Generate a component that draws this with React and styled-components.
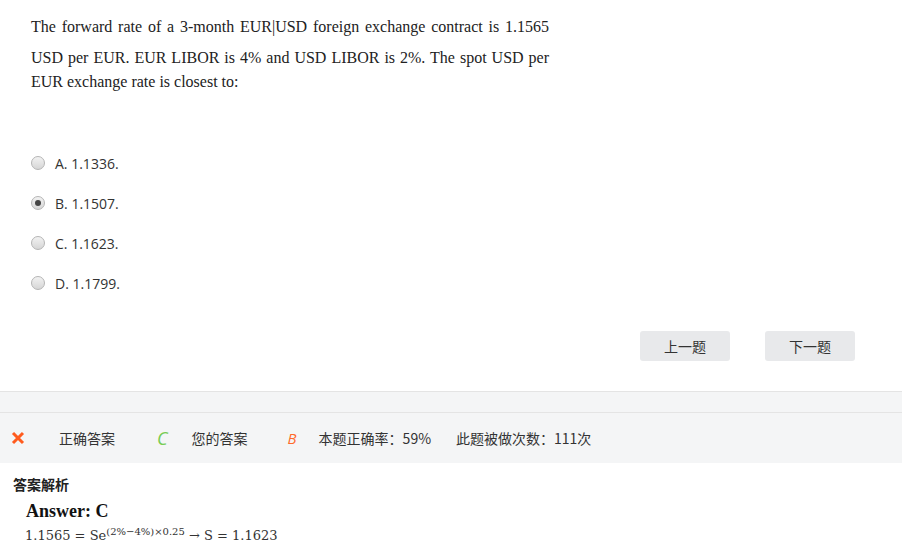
import styled, { createGlobalStyle } from "styled-components";

const GlobalStyle = createGlobalStyle`
  body {
    margin: 0;
    background: #ffffff;
    font-family: "Open Sans", "Noto Sans CJK SC", sans-serif;
  }
`;

const options = [
  { key: "A", text: "1.1336." },
  { key: "B", text: "1.1507.", checked: true },
  { key: "C", text: "1.1623." },
  { key: "D", text: "1.1799." },
];

export default function App() {
  return (
    <Page>
      <GlobalStyle />
      <Question>
        <Stem>
          The forward rate of a 3-month EUR|USD foreign exchange contract is 1.1565
          USD per EUR. EUR LIBOR is 4% and USD LIBOR is 2%. The spot USD per
          EUR exchange rate is closest to:
        </Stem>
        <Options>
          {options.map((o) => (
            <Option key={o.key}>
              <Radio checked={o.checked} />
              <span>
                {o.key}. {o.text}
              </span>
            </Option>
          ))}
        </Options>
        <Buttons>
          <NavButton>上一题</NavButton>
          <NavButton>下一题</NavButton>
        </Buttons>
      </Question>

      <Band />
      <ResultBar>
        <Cross viewBox="0 0 14 14">
          <path d="M2 2 L12 12 M12 2 L2 12" stroke="#ff5b1e" strokeWidth="3" />
        </Cross>
        <Label>正确答案</Label>
        <Letter color="#76cc54" size="18px" before="42px" after="24px">C</Letter>
        <Label>您的答案</Label>
        <Letter color="#ff6a2c" size="15px" before="40px" after="22px">B</Letter>
        <Label after="25px">本题正确率：59%</Label>
        <Label>此题被做次数：111次</Label>
      </ResultBar>

      <Analysis>
        <AnalysisTitle>答案解析</AnalysisTitle>
        <Answer>Answer: C</Answer>
        <Formula>
          1.1565 = Se<sup>(2%−4%)×0.25</sup> → S = 1.1623
        </Formula>
      </Analysis>
    </Page>
  );
}

const Page = styled.div`
  width: 902px;
  min-height: 558px;
  color: #333;
`;

const Question = styled.div`
  padding: 8px 0 30px 31px;
`;

const Stem = styled.p`
  margin: 0;
  width: 518px;
  font-family: "Liberation Serif", serif;
  font-size: 16px;
  line-height: 24px;
  text-align: justify;
  color: #222;

  &::first-line {
    line-height: 38px;
  }
`;

const Options = styled.div`
  display: flex;
  flex-direction: column;
  gap: 20px;
  margin-top: 59px;
`;

const Option = styled.label`
  display: flex;
  align-items: center;
  gap: 10px;
  height: 20px;
  font-size: 14px;
  color: #333;
`;

const Radio = styled.span`
  position: relative;
  width: 14px;
  height: 14px;
  border-radius: 50%;
  border: 1px solid #b5b5b5;
  background: linear-gradient(#f2f2f2, #d6d6d6);
  box-sizing: border-box;

  &::after {
    content: "";
    display: ${(p) => (p.checked ? "block" : "none")};
    position: absolute;
    left: 3px;
    top: 3px;
    width: 6px;
    height: 6px;
    border-radius: 50%;
    background: #444;
  }
`;

const Buttons = styled.div`
  display: flex;
  justify-content: flex-end;
  gap: 35px;
  margin-top: 38px;
  padding-right: 47px;
`;

const NavButton = styled.button`
  width: 90px;
  height: 30px;
  border: none;
  border-radius: 3px;
  background: #e8e9eb;
  color: #333;
  font-family: "Noto Sans CJK SC", sans-serif;
  font-size: 14px;
`;

const Band = styled.div`
  height: 20px;
  background: #f4f5f6;
  border-top: 1px solid #e4e4e4;
  border-bottom: 1px solid #e4e4e4;
`;

const ResultBar = styled.div`
  display: flex;
  align-items: center;
  height: 50px;
  padding-left: 11px;
  background: #f4f5f6;
  font-family: "Noto Sans CJK SC", sans-serif;
  font-size: 14px;
`;

const Cross = styled.svg`
  width: 14px;
  height: 14px;
  margin-right: 34px;
`;

const Label = styled.span`
  color: #333;
  margin-right: ${(p) => p.after || "0"};
`;

const Letter = styled.span`
  font-family: "Open Sans", sans-serif;
  font-style: italic;
  font-size: ${(p) => p.size};
  color: ${(p) => p.color};
  margin: 0 ${(p) => p.after} 0 ${(p) => p.before};
`;

const Analysis = styled.div`
  padding: 11px 0 0 13px;
`;

const AnalysisTitle = styled.div`
  font-family: "Noto Sans CJK SC", sans-serif;
  font-weight: bold;
  font-size: 14px;
  line-height: 20px;
  color: #222;
`;

const Answer = styled.div`
  margin: 6px 0 0 13px;
  font-family: "Liberation Serif", serif;
  font-weight: bold;
  font-size: 18px;
  line-height: 22px;
  color: #111;
`;

const Formula = styled.div`
  margin: 4px 0 0 12px;
  font-family: "DejaVu Serif", serif;
  font-size: 13px;
  line-height: 20px;
  color: #333;

  sup {
    font-size: 10px;
    line-height: 0;
  }
`;
